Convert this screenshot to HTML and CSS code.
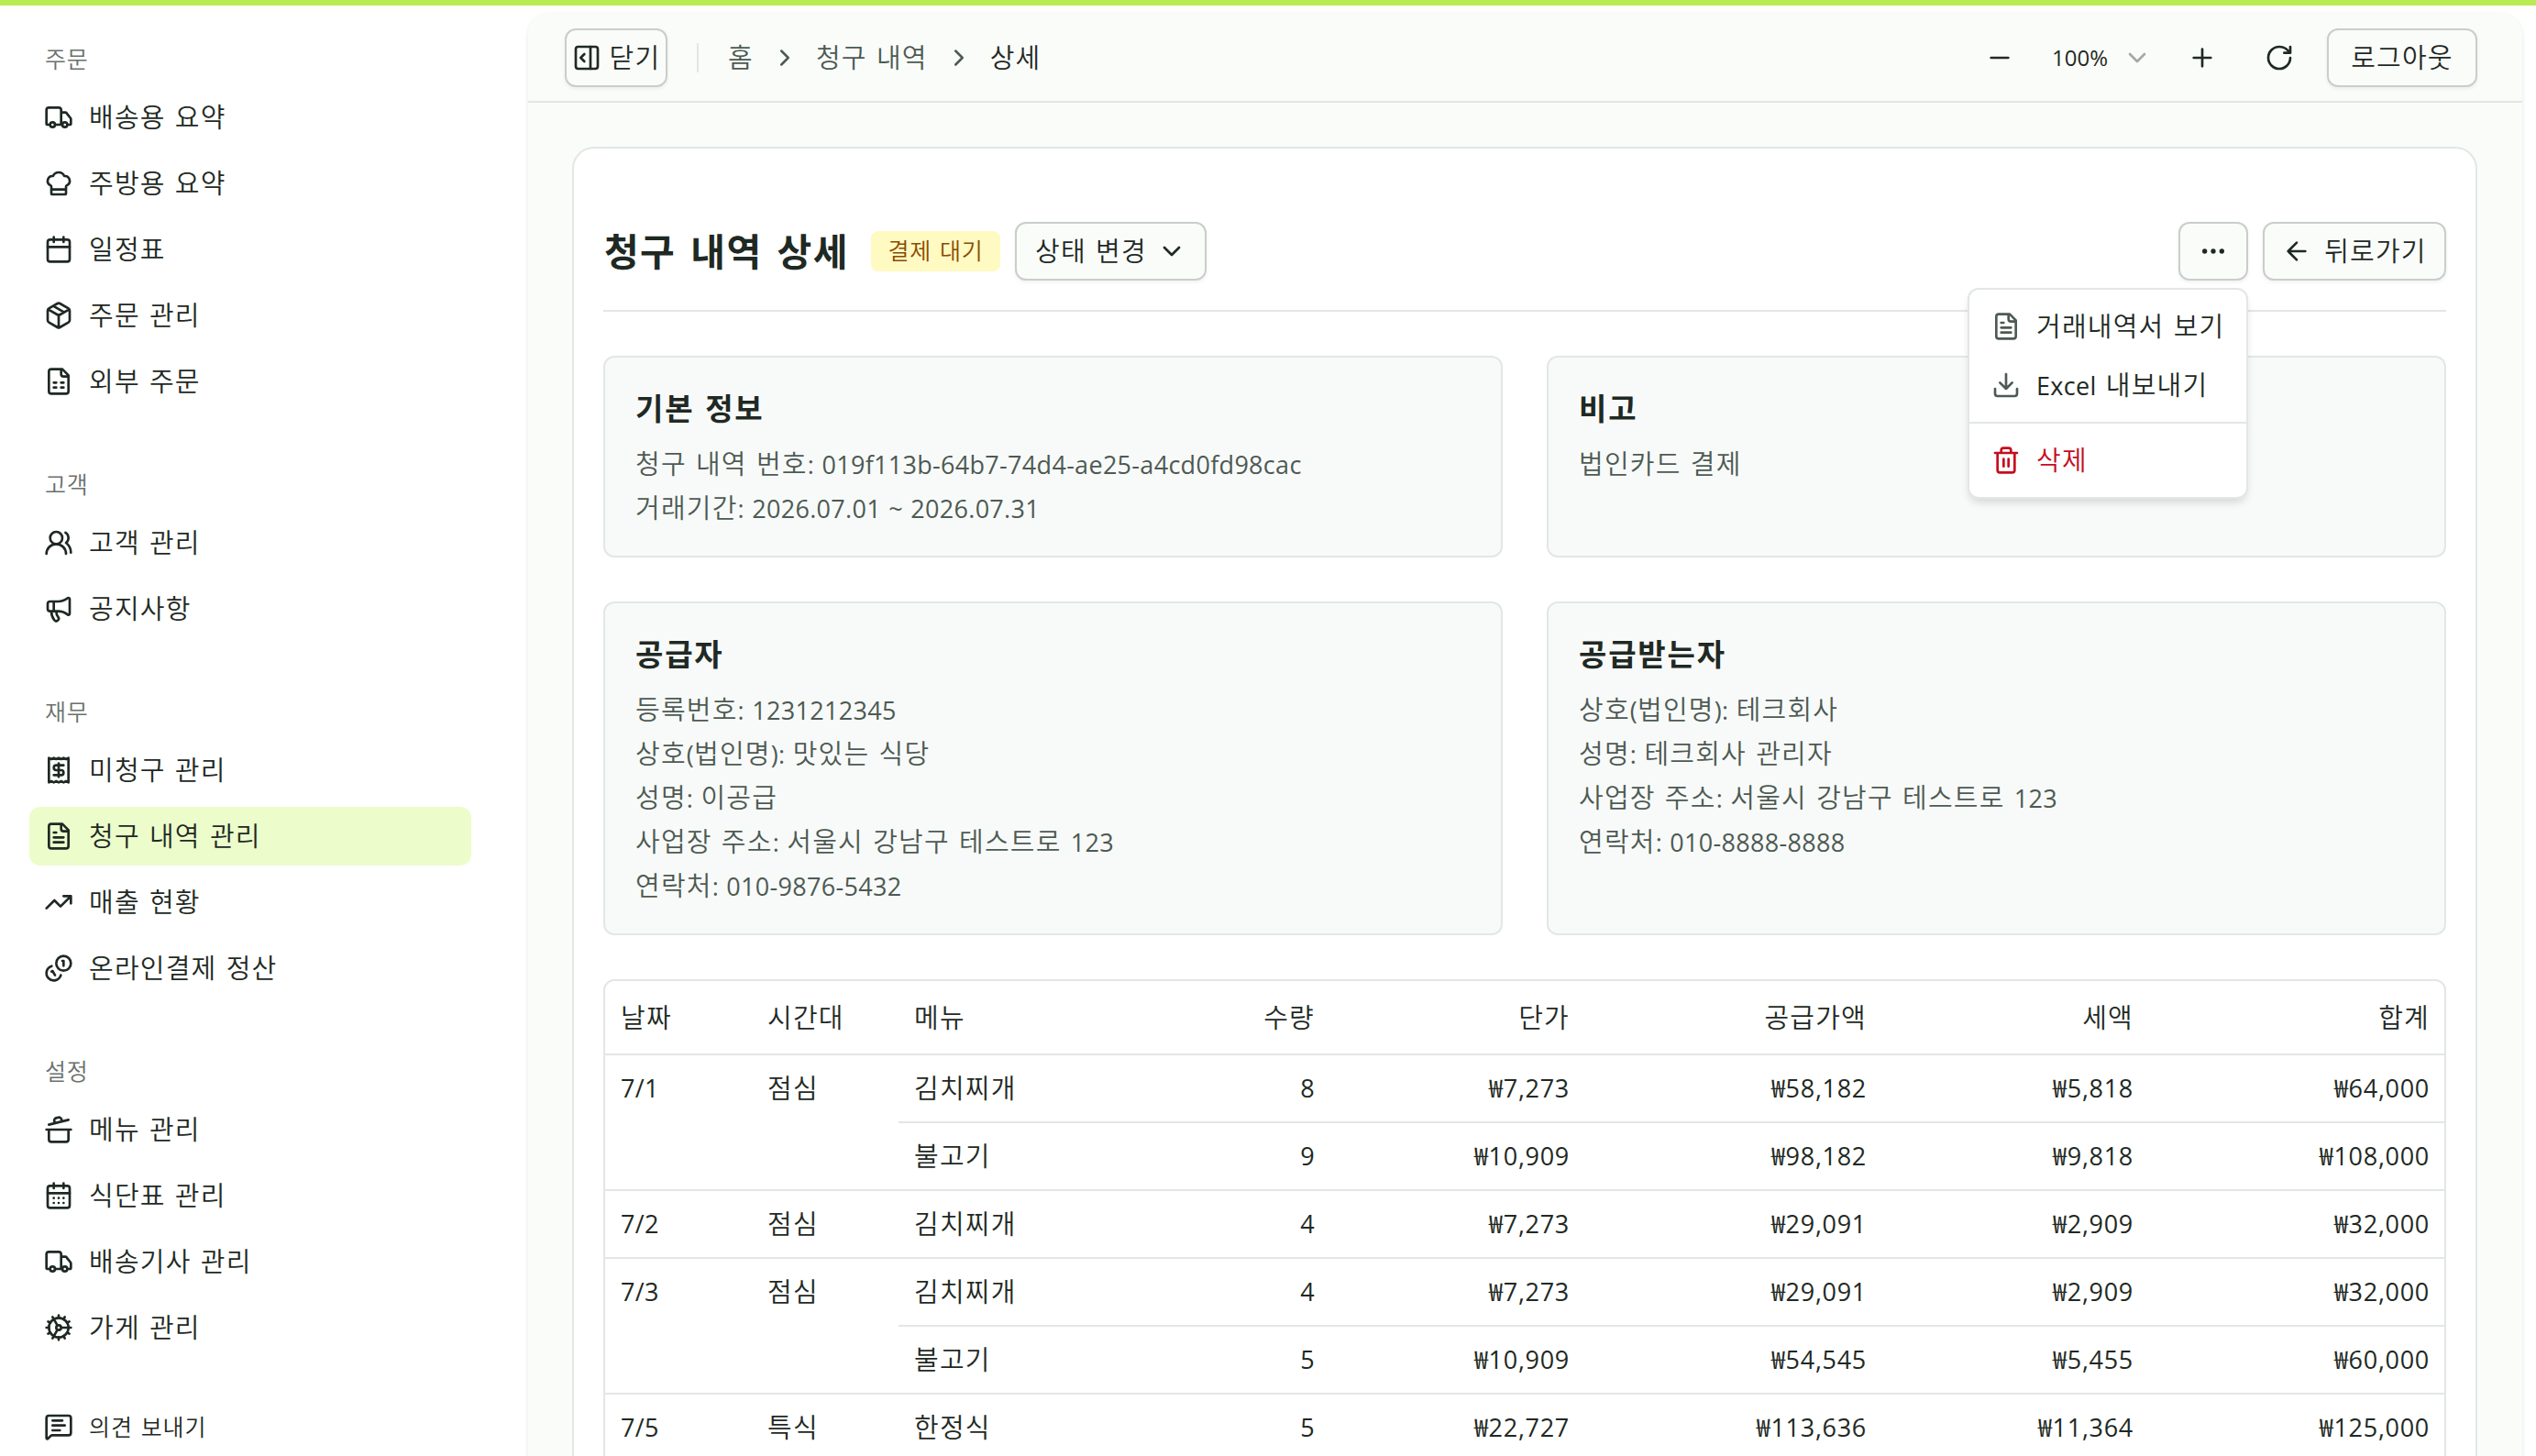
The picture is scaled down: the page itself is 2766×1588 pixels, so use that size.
FILE: index.html
```html
<!DOCTYPE html>
<html lang="ko">
<head>
<meta charset="utf-8">
<title>청구 내역 상세</title>
<link rel="stylesheet" href="styles.css">
</head>
<body>
<svg class="sprite" aria-hidden="true">
  <symbol id="truck" viewBox="0 0 24 24"><path d="M14 18V6a2 2 0 0 0-2-2H4a2 2 0 0 0-2 2v11a1 1 0 0 0 1 1h2M15 18H9M19 18h2a1 1 0 0 0 1-1v-3.65a1 1 0 0 0-.22-.624l-3.48-4.35A1 1 0 0 0 17.52 8H14"/><circle cx="17" cy="18" r="2"/><circle cx="7" cy="18" r="2"/></symbol>
  <symbol id="chef" viewBox="0 0 24 24"><path d="M17 21a1 1 0 0 0 1-1v-5.35c0-.457.316-.844.727-1.041a4 4 0 0 0-2.134-7.589 5 5 0 0 0-9.186 0 4 4 0 0 0-2.134 7.588c.411.198.727.585.727 1.041V20a1 1 0 0 0 1 1ZM6 17h12"/></symbol>
  <symbol id="calendar" viewBox="0 0 24 24"><path d="M8 2v4M16 2v4M3 10h18"/><rect x="3" y="4" width="18" height="18" rx="2"/></symbol>
  <symbol id="package" viewBox="0 0 24 24"><path d="M11 21.73a2 2 0 0 0 2 0l7-4A2 2 0 0 0 21 16V8a2 2 0 0 0-1-1.73l-7-4a2 2 0 0 0-2 0l-7 4A2 2 0 0 0 3 8v8a2 2 0 0 0 1 1.73zM12 22V12M3.29 7 12 12l8.71-5M7.5 4.27l9 5.15"/></symbol>
  <symbol id="sheet" viewBox="0 0 24 24"><path d="M15 2H6a2 2 0 0 0-2 2v16a2 2 0 0 0 2 2h12a2 2 0 0 0 2-2V7ZM14 2v4a2 2 0 0 0 2 2h4M8 13h2M14 13h2M8 17h2M14 17h2"/></symbol>
  <symbol id="users" viewBox="0 0 24 24"><path d="M18 21a8 8 0 0 0-16 0M22 20c0-3.37-2-6.5-4-8a5 5 0 0 0-.45-8.3"/><circle cx="10" cy="8" r="5"/></symbol>
  <symbol id="megaphone" viewBox="0 0 24 24"><path d="M11 6a13 13 0 0 0 8.4-2.8A1 1 0 0 1 21 4v12a1 1 0 0 1-1.6.8A13 13 0 0 0 11 14H5a2 2 0 0 1-2-2V8a2 2 0 0 1 2-2zM6 14a12 12 0 0 0 2.4 7.2 2 2 0 0 0 3.2-2.4A8 8 0 0 1 10 14M8 6v8"/></symbol>
  <symbol id="receipt" viewBox="0 0 24 24"><path d="M4 2v20l2-1 2 1 2-1 2 1 2-1 2 1 2-1 2 1V2l-2 1-2-1-2 1-2-1-2 1-2-1-2 1ZM16 8h-6a2 2 0 1 0 0 4h4a2 2 0 1 1 0 4H8M12 17.5v-11"/></symbol>
  <symbol id="file" viewBox="0 0 24 24"><path d="M15 2H6a2 2 0 0 0-2 2v16a2 2 0 0 0 2 2h12a2 2 0 0 0 2-2V7ZM14 2v4a2 2 0 0 0 2 2h4M10 9H8M16 13H8M16 17H8"/></symbol>
  <symbol id="trend" viewBox="0 0 24 24"><path d="M16 7h6v6M22 7l-8.5 8.5-5-5L2 17"/></symbol>
  <symbol id="coins" viewBox="0 0 24 24"><path d="M13.744 17.736a6 6 0 1 1-7.48-7.48M15 6h1v4M6.134 14.768l.866-.5 2 3.464"/><circle cx="16" cy="8" r="6"/></symbol>
  <symbol id="pot" viewBox="0 0 24 24"><path d="M2 12h20M20 12v8a2 2 0 0 1-2 2H6a2 2 0 0 1-2-2v-8M4 8l16-4M8.86 6.78l-.45-1.81a2 2 0 0 1 1.45-2.43l1.94-.48a2 2 0 0 1 2.43 1.46l.45 1.8"/></symbol>
  <symbol id="days" viewBox="0 0 24 24"><path d="M8 2v4M16 2v4M3 10h18M8 14h.01M12 14h.01M16 14h.01M8 18h.01M12 18h.01M16 18h.01"/><rect x="3" y="4" width="18" height="18" rx="2"/></symbol>
  <symbol id="cog" viewBox="0 0 24 24"><path d="M11 10.27 7 3.34M11 13.73l-4 6.93M12 22v-2M12 2v2M14 12h8M17 20.66l-1-1.73M17 3.34l-1 1.73M2 12h2M20.66 17l-1.73-1M20.66 7l-1.73 1M3.34 17l1.73-1M3.34 7l1.73 1"/><circle cx="12" cy="12" r="2"/><circle cx="12" cy="12" r="8"/></symbol>
  <symbol id="message" viewBox="0 0 24 24"><path d="M22 17a2 2 0 0 1-2 2H6.828a2 2 0 0 0-1.414.586l-2.202 2.202A.71.71 0 0 1 2 21.286V5a2 2 0 0 1 2-2h16a2 2 0 0 1 2 2zM7 11h10M7 15h6M7 7h8"/></symbol>
  <symbol id="panel" viewBox="0 0 24 24"><rect x="3" y="3" width="18" height="18" rx="2"/><path d="M15 3v18M10 15l-3-3 3-3"/></symbol>
  <symbol id="right" viewBox="0 0 24 24"><path d="m9 18 6-6-6-6"/></symbol>
  <symbol id="down" viewBox="0 0 24 24"><path d="m6 9 6 6 6-6"/></symbol>
  <symbol id="minus" viewBox="0 0 24 24"><path d="M5 12h14"/></symbol>
  <symbol id="plus" viewBox="0 0 24 24"><path d="M5 12h14M12 5v14"/></symbol>
  <symbol id="refresh" viewBox="0 0 24 24"><path d="M21 12a9 9 0 1 1-9-9c2.52 0 4.93 1 6.74 2.74L21 8M21 3v5h-5"/></symbol>
  <symbol id="more" viewBox="0 0 24 24"><circle cx="12" cy="12" r="1"/><circle cx="19" cy="12" r="1"/><circle cx="5" cy="12" r="1"/></symbol>
  <symbol id="back" viewBox="0 0 24 24"><path d="m12 19-7-7 7-7M19 12H5"/></symbol>
  <symbol id="download" viewBox="0 0 24 24"><path d="M12 15V3M21 15v4a2 2 0 0 1-2 2H5a2 2 0 0 1-2-2v-4M7 10l5 5 5-5"/></symbol>
  <symbol id="trash" viewBox="0 0 24 24"><path d="M10 11v6M14 11v6M19 6v14a2 2 0 0 1-2 2H7a2 2 0 0 1-2-2V6M3 6h18M8 6V4a2 2 0 0 1 2-2h4a2 2 0 0 1 2 2v2"/></symbol>
</svg>

<div class="topbar"></div>
<div class="app">
  <nav class="sidebar">
    <section class="group">
      <h2 class="group-label">주문</h2>
      <a class="item"><svg class="icon"><use href="#truck"/></svg>배송용 요약</a>
      <a class="item"><svg class="icon"><use href="#chef"/></svg>주방용 요약</a>
      <a class="item"><svg class="icon"><use href="#calendar"/></svg>일정표</a>
      <a class="item"><svg class="icon"><use href="#package"/></svg>주문 관리</a>
      <a class="item"><svg class="icon"><use href="#sheet"/></svg>외부 주문</a>
    </section>
    <section class="group">
      <h2 class="group-label">고객</h2>
      <a class="item"><svg class="icon"><use href="#users"/></svg>고객 관리</a>
      <a class="item"><svg class="icon"><use href="#megaphone"/></svg>공지사항</a>
    </section>
    <section class="group">
      <h2 class="group-label">재무</h2>
      <a class="item"><svg class="icon"><use href="#receipt"/></svg>미청구 관리</a>
      <a class="item active"><svg class="icon"><use href="#file"/></svg>청구 내역 관리</a>
      <a class="item"><svg class="icon"><use href="#trend"/></svg>매출 현황</a>
      <a class="item"><svg class="icon"><use href="#coins"/></svg>온라인결제 정산</a>
    </section>
    <section class="group">
      <h2 class="group-label">설정</h2>
      <a class="item"><svg class="icon"><use href="#pot"/></svg>메뉴 관리</a>
      <a class="item"><svg class="icon"><use href="#days"/></svg>식단표 관리</a>
      <a class="item"><svg class="icon"><use href="#truck"/></svg>배송기사 관리</a>
      <a class="item"><svg class="icon"><use href="#cog"/></svg>가게 관리</a>
    </section>
    <a class="item feedback"><svg class="icon"><use href="#message"/></svg>의견 보내기</a>
  </nav>

  <main class="main">
    <header class="header">
      <button class="btn close"><svg class="icon"><use href="#panel"/></svg>닫기</button>
      <span class="sep"></span>
      <div class="crumbs">
        <span>홈</span><svg class="icon chev"><use href="#right"/></svg><span>청구 내역</span><svg class="icon chev"><use href="#right"/></svg><span class="current">상세</span>
      </div>
      <div class="tools">
        <svg class="icon"><use href="#minus"/></svg>
        <span class="zoom">100%<svg class="icon muted"><use href="#down"/></svg></span>
        <svg class="icon"><use href="#plus"/></svg>
        <svg class="icon refresh"><use href="#refresh"/></svg>
        <button class="btn logout">로그아웃</button>
      </div>
    </header>

    <article class="card">
      <div class="card-head">
        <h1 class="title">청구 내역 상세</h1>
        <span class="badge">결제 대기</span>
        <button class="btn status">상태 변경<svg class="icon"><use href="#down"/></svg></button>
        <div class="actions">
          <div class="more-wrap">
            <button class="btn more"><svg class="icon"><use href="#more"/></svg></button>
            <div class="menu">
              <div class="menu-group">
                <a class="menu-item"><svg class="icon"><use href="#file"/></svg>거래내역서 보기</a>
                <a class="menu-item"><svg class="icon"><use href="#download"/></svg><span><span class="en">Excel</span> 내보내기</span></a>
              </div>
              <div class="menu-group">
                <a class="menu-item danger"><svg class="icon"><use href="#trash"/></svg>삭제</a>
              </div>
            </div>
          </div>
          <button class="btn back"><svg class="icon"><use href="#back"/></svg>뒤로가기</button>
        </div>
      </div>

      <div class="infos">
        <section class="info">
          <h3>기본 정보</h3>
          <p>청구 내역 번호<span class="en">: 019f113b-64b7-74d4-ae25-a4cd0fd98cac</span></p>
          <p>거래기간<span class="en">: 2026.07.01 ~ 2026.07.31</span></p>
        </section>
        <section class="info">
          <h3>비고</h3>
          <p>법인카드 결제</p>
        </section>
        <section class="info">
          <h3>공급자</h3>
          <p>등록번호<span class="en">: 1231212345</span></p>
          <p>상호<span class="en">(</span>법인명<span class="en">): </span>맛있는 식당</p>
          <p>성명<span class="en">: </span>이공급</p>
          <p>사업장 주소<span class="en">: </span>서울시 강남구 테스트로 <span class="en">123</span></p>
          <p>연락처<span class="en">: 010-9876-5432</span></p>
        </section>
        <section class="info">
          <h3>공급받는자</h3>
          <p>상호<span class="en">(</span>법인명<span class="en">): </span>테크회사</p>
          <p>성명<span class="en">: </span>테크회사 관리자</p>
          <p>사업장 주소<span class="en">: </span>서울시 강남구 테스트로 <span class="en">123</span></p>
          <p>연락처<span class="en">: 010-8888-8888</span></p>
        </section>
      </div>

      <div class="table-box">
        <table class="table">
          <colgroup><col class="c-date"><col class="c-time"><col class="c-menu"><col class="c-price"><col class="c-supply"><col class="c-tax"><col class="c-total"></colgroup>
          <thead>
            <tr><th>날짜</th><th>시간대</th><th class="menu-cell"><span>메뉴</span><span>수량</span></th><th class="r">단가</th><th class="r">공급가액</th><th class="r">세액</th><th class="r">합계</th></tr>
          </thead>
          <tbody>
            <tr><td rowspan="2" class="en">7/1</td><td rowspan="2">점심</td><td class="menu-cell"><span>김치찌개</span><span class="en">8</span></td><td class="r en">₩7,273</td><td class="r en">₩58,182</td><td class="r en">₩5,818</td><td class="r en">₩64,000</td></tr>
            <tr><td class="menu-cell"><span>불고기</span><span class="en">9</span></td><td class="r en">₩10,909</td><td class="r en">₩98,182</td><td class="r en">₩9,818</td><td class="r en">₩108,000</td></tr>
            <tr><td class="en">7/2</td><td>점심</td><td class="menu-cell"><span>김치찌개</span><span class="en">4</span></td><td class="r en">₩7,273</td><td class="r en">₩29,091</td><td class="r en">₩2,909</td><td class="r en">₩32,000</td></tr>
            <tr><td rowspan="2" class="en">7/3</td><td rowspan="2">점심</td><td class="menu-cell"><span>김치찌개</span><span class="en">4</span></td><td class="r en">₩7,273</td><td class="r en">₩29,091</td><td class="r en">₩2,909</td><td class="r en">₩32,000</td></tr>
            <tr><td class="menu-cell"><span>불고기</span><span class="en">5</span></td><td class="r en">₩10,909</td><td class="r en">₩54,545</td><td class="r en">₩5,455</td><td class="r en">₩60,000</td></tr>
            <tr><td class="en">7/5</td><td>특식</td><td class="menu-cell"><span>한정식</span><span class="en">5</span></td><td class="r en">₩22,727</td><td class="r en">₩113,636</td><td class="r en">₩11,364</td><td class="r en">₩125,000</td></tr>
          </tbody>
        </table>
      </div>
    </article>
  </main>
</div>
</body>
</html>
```
FILE: styles.css
```css
* { box-sizing: border-box; }
html, body { margin: 0; height: 1588px; overflow: hidden; }
body {
  display: flex;
  flex-direction: column;
  background: #fefffe;
  color: #1f2924;
  font-family: "Open Sans", "Noto Sans CJK KR", sans-serif;
  font-size: 29px;
  font-weight: 350;
  line-height: 48px;
  letter-spacing: 1.2px;
  word-spacing: 1.5px;
  white-space: nowrap;
}
h1, h2, h3, p { margin: 0; font-weight: inherit; }
.sprite { display: none; }
.icon {
  flex: none;
  width: 32px;
  height: 32px;
  fill: none;
  stroke: currentColor;
  stroke-width: 2;
  stroke-linecap: round;
  stroke-linejoin: round;
}
.en { font-size: 27px; font-weight: 400; letter-spacing: 0.3px; word-spacing: 1px; }
p .en, .menu-item .en { line-height: 1; }

.topbar { flex: none; height: 6px; background: #b9ec53; }
.app { flex: 1; min-height: 0; display: flex; }

/* Sidebar */
.sidebar {
  flex: none;
  width: 576px;
  padding: 26px 62px 0 32px;
  display: flex;
  flex-direction: column;
  gap: 48px;
}
.group { display: flex; flex-direction: column; gap: 8px; }
.group-label {
  height: 64px;
  margin-bottom: -8px;
  padding-left: 17px;
  font-size: 25px;
  line-height: 64px;
  letter-spacing: 0.8px;
  color: #6b706d;
}
.item {
  height: 64px;
  padding: 0 16px;
  display: flex;
  align-items: center;
  gap: 17px;
  border-radius: 12px;
}
.item.active { background: #ecfccb; }
.feedback { margin-top: -4px; font-size: 25px; letter-spacing: 0.9px; }

/* Main panel */
.main {
  flex: none;
  width: 2175px;
  height: 1600px;
  margin-top: 8px;
  border-radius: 24px 24px 0 0;
  background: #fafcf9;
  box-shadow: 0 2px 5px rgba(20, 40, 30, 0.1);
}
.header {
  height: 98px;
  padding: 1px 49px 0 40px;
  display: flex;
  align-items: center;
  border-bottom: 2px solid #e3e7e4;
}
.btn {
  height: 64px;
  padding: 0;
  display: flex;
  align-items: center;
  justify-content: center;
  border: 2px solid #c9cecb;
  border-radius: 12px;
  background: #fafcfa;
  box-shadow: 0 2px 4px rgba(0, 0, 0, 0.06);
  color: inherit;
  font: inherit;
  letter-spacing: inherit;
  word-spacing: inherit;
}
.close { width: 112px; gap: 9px; }
.sep { width: 2px; height: 32px; margin: 0 32px; background: #e3e7e4; }
.crumbs { display: flex; align-items: center; gap: 19px; color: #4d5a53; }
.crumbs .current { color: #1f2924; }
.chev { width: 30px; height: 30px; }
.tools { margin-left: auto; display: flex; align-items: center; }
.zoom {
  margin: 0 39px 0 41px;
  display: flex;
  align-items: center;
  gap: 16px;
  font-size: 24px;
  font-weight: 400;
  letter-spacing: 0;
}
.muted { color: #a3aaa6; }
.refresh { margin: 0 36px 0 52px; }
.logout { width: 164px; }

.card {
  height: 1500px;
  margin: 48px 49px 0 48px;
  padding: 80px 32px 0;
  border: 2px solid #e3e7e4;
  border-radius: 24px;
  background: #fefffe;
}
.card-head {
  height: 98px;
  display: flex;
  align-items: flex-start;
  border-bottom: 2px solid #e3e7e4;
}
.title { width: 292px; padding-left: 1px; font-size: 41px; font-weight: 700; line-height: 64px; letter-spacing: 1.4px; word-spacing: 4px; }
.badge {
  width: 141px;
  height: 44px;
  margin: 10px 16px 0 0;
  border-radius: 8px;
  background: #fff9c2;
  color: #894b00;
  font-size: 25px;
  line-height: 43px;
  letter-spacing: 0.8px;
  text-align: center;
}
.status { width: 209px; gap: 11px; }
.actions { margin-left: auto; display: flex; gap: 16px; }
.more-wrap { position: relative; }
.more { width: 76px; }
.back { width: 200px; gap: 14px; }

/* Dropdown over the page content */
.menu {
  position: absolute;
  top: 72px;
  right: 0;
  width: 306px;
  border: 2px solid #e3e7e4;
  border-radius: 12px;
  background: #fefffe;
  box-shadow: 0 6px 10px -2px rgba(0, 0, 0, 0.14);
}
.menu-group { padding: 8px 0; }
.menu-group + .menu-group { border-top: 2px solid #e3e7e4; }
.menu-item {
  height: 64px;
  padding-left: 24px;
  display: flex;
  align-items: center;
  gap: 17px;
}
.menu-item .icon { color: #4d5a53; }
.menu-item.danger, .menu-item.danger .icon { color: #c50d1f; }

.infos {
  margin-top: 48px;
  display: grid;
  grid-template-columns: 1fr 1fr;
  gap: 48px;
}
.info {
  min-height: 220px;
  padding: 32px 32px 28px 33px;
  border: 2px solid #e3e7e4;
  border-radius: 12px;
  background: #f8faf9;
  color: #4d5a53;
}
.info p { height: 48px; }
.info h3 {
  margin-bottom: 12px;
  color: #1f2924;
  font-size: 33px;
  font-weight: 700;
  line-height: 48px;
  letter-spacing: 1.8px;
}

.table-box { margin-top: 48px; border: 2px solid #e3e7e4; border-radius: 12px 12px 0 0; }
.table { width: 100%; table-layout: fixed; border-collapse: separate; border-spacing: 0; }
.c-date, .c-time { width: 160px; }
.c-menu { width: 470px; }
.c-price { width: 278px; }
.c-supply { width: 324px; }
.c-tax { width: 291px; }
.table th, .table td {
  height: 74px;
  padding: 12px 16px 12px 17px;
  border-bottom: 2px solid #e3e7e4;
  font-weight: inherit;
  text-align: left;
  vertical-align: top;
}
.table td.en { font-weight: 400; }
.table th { height: 81px; padding: 16px 16px 15px 17px; }
.menu-cell span:first-child { float: left; }
.menu-cell span:last-child { float: right; }
.table .r { text-align: right; }
.table .r.en { letter-spacing: 0.7px; }
```
